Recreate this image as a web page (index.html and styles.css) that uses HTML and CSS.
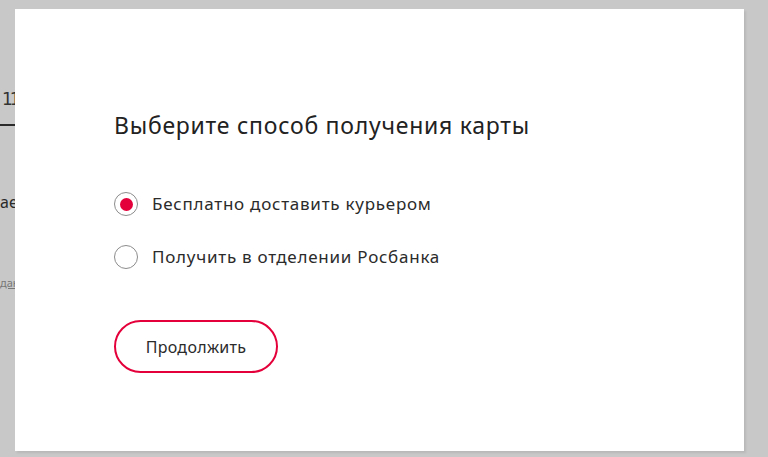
FILE: index.html
```html
<!DOCTYPE html>
<html lang="ru">
<head>
<meta charset="utf-8">
<title>Выберите способ получения карты</title>
<link rel="stylesheet" href="styles.css">
</head>
<body>
<div class="backdrop">
  <div class="strip">
    <div class="bg-row bg-phone">11</div>
    <div class="bg-line"></div>
    <div class="bg-row bg-text">ает</div>
    <div class="bg-row bg-link">дан</div>
  </div>
</div>
<div class="modal">
  <h1 class="title">Выберите способ получения карты</h1>
  <div class="options">
    <label class="option">
      <span class="radio radio--checked"></span>
      <span class="option-text">Бесплатно доставить курьером</span>
    </label>
    <label class="option">
      <span class="radio"></span>
      <span class="option-text">Получить в отделении Росбанка</span>
    </label>
  </div>
  <button class="btn" type="button">Продолжить</button>
</div>
</body>
</html>
```
FILE: styles.css
```css
html, body {
  margin: 0;
  padding: 0;
  width: 768px;
  height: 457px;
  overflow: hidden;
  background: #c8c8c8;
  font-family: "Noto Sans", "Open Sans", sans-serif;
}

.backdrop {
  width: 768px;
  height: 457px;
}

.strip {
  width: 60px;
  display: flex;
  flex-direction: column;
}

.bg-row {
  white-space: nowrap;
}

.bg-phone {
  margin-top: 88px;
  padding-left: 2px;
  font-family: "DejaVu Sans", sans-serif;
  font-size: 17px;
  line-height: 22px;
  letter-spacing: -3px;
  color: #333;
}

.bg-line {
  margin-top: 14px;
  width: 15px;
  height: 2px;
  background: #2a2a2a;
}

.bg-text {
  margin-top: 65px;
  font-size: 16px;
  line-height: 22px;
  color: #2a2a2a;
}

.bg-link {
  margin-top: 63px;
  font-size: 11px;
  line-height: 14px;
  color: #777;
  text-decoration: underline;
}

.modal {
  position: absolute;
  left: 15px;
  top: 9px;
  width: 729px;
  height: 442px;
  background: #fff;
  box-shadow: 2px 2px 2px rgba(0, 0, 0, 0.08);
  box-sizing: border-box;
  padding: 101px 0 0 99px;
  display: flex;
  flex-direction: column;
  align-items: flex-start;
}

.title {
  margin: 0;
  font-size: 23px;
  font-weight: 400;
  line-height: 30px;
  letter-spacing: 0.75px;
  color: #222;
}

.options {
  margin-top: 52px;
  display: flex;
  flex-direction: column;
  gap: 29px;
}

.option {
  display: flex;
  align-items: center;
  gap: 14px;
}

.radio {
  width: 24px;
  height: 24px;
  box-sizing: border-box;
  border: 1px solid #8c8c8c;
  border-radius: 50%;
  display: flex;
  align-items: center;
  justify-content: center;
}

.radio--checked::after {
  content: "";
  width: 13px;
  height: 13px;
  border-radius: 50%;
  background: #e4003a;
}

.option-text {
  font-size: 17px;
  line-height: 24px;
  letter-spacing: 0.75px;
  color: #2b2b2b;
}

.btn {
  margin-top: 51px;
  width: 164px;
  height: 53px;
  box-sizing: border-box;
  border: 2px solid #e4003a;
  border-radius: 27px;
  background: #fff;
  font-family: inherit;
  font-size: 16px;
  letter-spacing: 0.3px;
  color: #2b2b2b;
  padding: 0;
}
```
